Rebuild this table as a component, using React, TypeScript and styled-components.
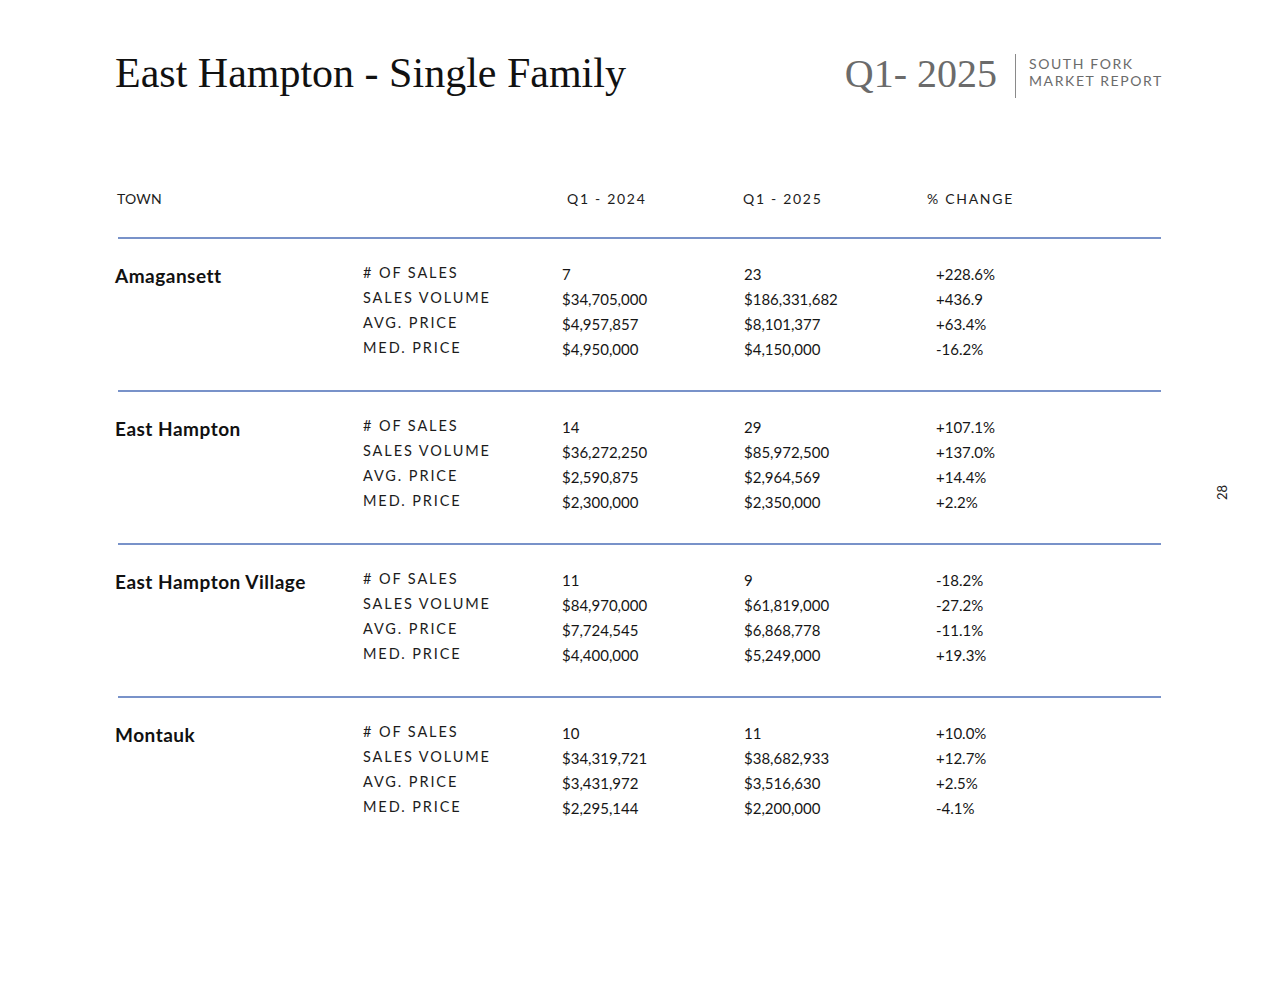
import React from "react";
import styled, { createGlobalStyle } from "styled-components";

const GlobalStyle = createGlobalStyle`
  html, body { margin: 0; padding: 0; background: #ffffff; }
  body { font-family: Lato, "Noto Sans", sans-serif; color: #161616; }
`;

const Page = styled.div`
  display: flex;
  width: 1280px;
  height: 988px;
  background: #ffffff;
`;

const Main = styled.main`
  width: 1048px;
  padding: 50px 0 0 115px;
  display: flex;
  flex-direction: column;
`;

const Side = styled.aside`
  flex: 1;
  display: flex;
  align-items: center;
  justify-content: center;
`;

const Folio = styled.span`
  writing-mode: vertical-rl;
  transform: rotate(180deg);
  font-family: Lato, sans-serif;
  font-size: 13px;
  color: #222;
  margin-top: -2px;
`;

const TopBar = styled.header`
  display: flex;
  justify-content: space-between;
  align-items: center;
  height: 46px;
`;

const Title = styled.h1`
  margin: 0;
  font-family: "Liberation Serif", "Times New Roman", serif;
  font-weight: 400;
  font-size: 42px;
  line-height: 46px;
  letter-spacing: 0;
  color: #111;
`;

const Brand = styled.div`
  display: flex;
  align-items: center;
  margin-top: 1px;
`;

const Quarter = styled.span`
  font-family: "Liberation Serif", "Times New Roman", serif;
  font-size: 40px;
  line-height: 46px;
  color: #6b6b6b;
`;

const Divider = styled.span`
  width: 1px;
  height: 44px;
  background: #8a8a8a;
  margin: 5px 13px 0 18px;
`;

const BrandText = styled.div`
  font-family: Lato, sans-serif;
  font-size: 14px;
  line-height: 17px;
  letter-spacing: 1.6px;
  color: #6b6b6b;
  margin-top: -3px;
`;

const HeaderRow = styled.div`
  display: grid;
  grid-template-columns: 450px 176px 184px 1fr;
  margin: 93px 0 28px 2px;
  height: 20px;
  align-items: center;
`;

const HeadCell = styled.span<{ $tight?: boolean }>`
  font-family: Lato, sans-serif;
  font-size: 14px;
  line-height: 20px;
  letter-spacing: ${(p) => (p.$tight ? "0.2px" : "1.7px")};
  color: #1c1c1c;
`;

const Section = styled.section`
  display: grid;
  grid-template-columns: 245px 199px 182px 192px 1fr;
  grid-auto-rows: 25px;
  align-items: center;
  border-top: 2px solid #7892c9;
  margin: 0 2px 0 3px;
  padding: 22px 0 29px;
`;

const TownName = styled.h2`
  grid-column: 1;
  grid-row: 1;
  margin: 0 0 0 -3px;
  font-family: Lato, sans-serif;
  font-weight: 700;
  font-size: 19px;
  line-height: 25px;
  letter-spacing: 0.5px;
  transform: translateY(2px);
  color: #111;
`;

const Label = styled.span`
  grid-column: 2;
  font-family: Lato, sans-serif;
  font-size: 14.5px;
  letter-spacing: 1.9px;
  color: #1c1c1c;
  transform: translateY(-1px);
`;

const Value = styled.span<{ $col: number }>`
  grid-column: ${(p) => p.$col};
  font-family: Lato, sans-serif;
  font-size: 15px;
  color: #161616;
`;

type Town = {
  name: string;
  rows: [string, string, string, string][];
};

const towns: Town[] = [
  {
    name: "Amagansett",
    rows: [
      ["# OF SALES", "7", "23", "+228.6%"],
      ["SALES VOLUME", "$34,705,000", "$186,331,682", "+436.9"],
      ["AVG. PRICE", "$4,957,857", "$8,101,377", "+63.4%"],
      ["MED. PRICE", "$4,950,000", "$4,150,000", "-16.2%"],
    ],
  },
  {
    name: "East Hampton",
    rows: [
      ["# OF SALES", "14", "29", "+107.1%"],
      ["SALES VOLUME", "$36,272,250", "$85,972,500", "+137.0%"],
      ["AVG. PRICE", "$2,590,875", "$2,964,569", "+14.4%"],
      ["MED. PRICE", "$2,300,000", "$2,350,000", "+2.2%"],
    ],
  },
  {
    name: "East Hampton Village",
    rows: [
      ["# OF SALES", "11", "9", "-18.2%"],
      ["SALES VOLUME", "$84,970,000", "$61,819,000", "-27.2%"],
      ["AVG. PRICE", "$7,724,545", "$6,868,778", "-11.1%"],
      ["MED. PRICE", "$4,400,000", "$5,249,000", "+19.3%"],
    ],
  },
  {
    name: "Montauk",
    rows: [
      ["# OF SALES", "10", "11", "+10.0%"],
      ["SALES VOLUME", "$34,319,721", "$38,682,933", "+12.7%"],
      ["AVG. PRICE", "$3,431,972", "$3,516,630", "+2.5%"],
      ["MED. PRICE", "$2,295,144", "$2,200,000", "-4.1%"],
    ],
  },
];

export default function App() {
  return (
    <>
      <GlobalStyle />
      <Page>
        <Main>
          <TopBar>
            <Title>East Hampton - Single Family</Title>
            <Brand>
              <Quarter>Q1- 2025</Quarter>
              <Divider />
              <BrandText>
                SOUTH FORK
                <br />
                MARKET REPORT
              </BrandText>
            </Brand>
          </TopBar>
          <HeaderRow>
            <HeadCell $tight>TOWN</HeadCell>
            <HeadCell>Q1 - 2024</HeadCell>
            <HeadCell>Q1 - 2025</HeadCell>
            <HeadCell>% CHANGE</HeadCell>
          </HeaderRow>
          {towns.map((t) => (
            <Section key={t.name}>
              <TownName>{t.name}</TownName>
              {t.rows.map((r) => (
                <React.Fragment key={r[0]}>
                  <Label>{r[0]}</Label>
                  <Value $col={3}>{r[1]}</Value>
                  <Value $col={4}>{r[2]}</Value>
                  <Value $col={5}>{r[3]}</Value>
                </React.Fragment>
              ))}
            </Section>
          ))}
        </Main>
        <Side>
          <Folio>28</Folio>
        </Side>
      </Page>
    </>
  );
}
